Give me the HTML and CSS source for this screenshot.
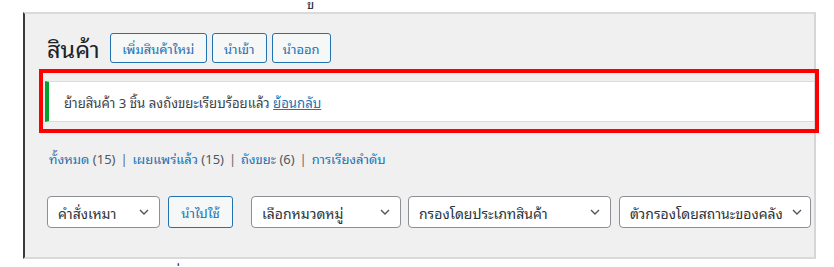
FILE: index.html
```html
<!DOCTYPE html>
<html lang="th">
<head>
<meta charset="utf-8">
<title>สินค้า</title>
<link rel="stylesheet" href="styles.css">
</head>
<body>
<div class="page">
  <div class="top-strip"><span class="stray-top">ข</span></div>
  <div class="panel">
    <div class="title-row">
      <h1 class="title">สินค้า</h1>
      <a class="btn btn-add">เพิ่มสินค้าใหม่</a>
      <a class="btn btn-import">นำเข้า</a>
      <a class="btn btn-export">นำออก</a>
    </div>
    <div class="notice">
      <p class="notice-text">ย้ายสินค้า 3 ชิ้น ลงถังขยะเรียบร้อยแล้ว <a class="notice-link">ย้อนกลับ</a></p>
      <div class="highlight"></div>
    </div>
    <ul class="subsubsub">
      <li><a class="sub-link">ทั้งหมด</a> <span class="count">(15)</span> <span class="sep">|</span> </li>
      <li><a class="sub-link">เผยแพร่แล้ว</a> <span class="count">(15)</span> <span class="sep">|</span> </li>
      <li><a class="sub-link">ถังขยะ</a> <span class="count">(6)</span> <span class="sep">|</span> </li>
      <li><a class="sub-link">การเรียงลำดับ</a></li>
    </ul>
    <div class="filters">
      <div class="select sel-bulk"><span>คำสั่งเหมา</span><svg class="chev" viewBox="0 0 10 6" width="10" height="6"><path d="M1 1l4 4 4-4" fill="none" stroke="#50575e" stroke-width="1.4"/></svg></div>
      <a class="btn btn-apply">นำไปใช้</a>
      <div class="select sel-cat"><span>เลือกหมวดหมู่</span><svg class="chev" viewBox="0 0 10 6" width="10" height="6"><path d="M1 1l4 4 4-4" fill="none" stroke="#50575e" stroke-width="1.4"/></svg></div>
      <div class="select sel-type"><span>กรองโดยประเภทสินค้า</span><svg class="chev" viewBox="0 0 10 6" width="10" height="6"><path d="M1 1l4 4 4-4" fill="none" stroke="#50575e" stroke-width="1.4"/></svg></div>
      <div class="select sel-stock"><span>ตัวกรองโดยสถานะของคลัง</span><svg class="chev" viewBox="0 0 10 6" width="10" height="6"><path d="M1 1l4 4 4-4" fill="none" stroke="#50575e" stroke-width="1.4"/></svg></div>
    </div>
  </div>
  <div class="bottom-strip"><span class="stray-bottom">ก่</span></div>
</div>
</body>
</html>
```
FILE: styles.css
```css
html, body {
  margin: 0;
  padding: 0;
  background: #ffffff;
}
body {
  width: 834px;
  height: 267px;
  overflow: hidden;
  font-family: "Noto Sans Thai Looped", "Noto Sans Thai", "Leelawadee UI", Tahoma, "Noto Sans", "DejaVu Sans", sans-serif;
  color: #3c434a;
}
.page {
  width: 834px;
}
.top-strip {
  height: 12px;
  overflow: hidden;
}
.stray-top {
  display: block;
  margin-left: 307px;
  margin-top: -6px;
  font-size: 13px;
  line-height: 20px;
  color: #1d2327;
}
.panel {
  box-sizing: border-box;
  margin-left: 23px;
  width: 793px;
  height: 247px;
  background: #f0f0f1;
  border-top: 2px solid #dadadb;
  border-left: 2px solid #3a3a3a;
  border-right: 2px solid #d6d6d7;
  border-bottom: 2px solid #dadadb;
  padding: 19px 0 0 20px;
}
.title-row {
  display: flex;
  align-items: center;
  height: 30px;
}
.title {
  margin: 0 10px 0 2px;
  font-size: 23.5px;
  font-weight: 400;
  color: #1d2327;
  line-height: 30px;
}
.btn {
  box-sizing: border-box;
  display: inline-flex;
  align-items: center;
  justify-content: center;
  height: 30px;
  border: 1px solid #2271b1;
  border-radius: 3px;
  background: #f6f7f7;
  color: #2271b1;
  font-size: 13px;
  margin-right: 5px;
}
.btn-add { width: 97px; }
.btn-import { width: 55px; }
.btn-export { width: 59px; }
.notice {
  position: relative;
  box-sizing: border-box;
  margin-top: 18px;
  height: 41px;
  background: #ffffff;
  border: 1px solid #dcdcde;
  border-left: 4px solid #00a32a;
  border-right: none;
  display: flex;
  align-items: center;
  padding-left: 15px;
}
.notice-text {
  margin: 0;
  font-size: 13.2px;
  color: #3c434a;
}
.notice-link {
  color: #2271b1;
  text-decoration: underline;
}
.highlight {
  position: absolute;
  left: -10px;
  top: -13px;
  width: 780px;
  height: 64px;
  box-sizing: border-box;
  border: 4px solid #ff0000;
  pointer-events: none;
}
.subsubsub {
  list-style: none;
  margin: 27px 0 0 4px;
  padding: 0;
  display: flex;
  font-size: 13px;
  line-height: 20px;
  color: #646970;
}
.subsubsub li {
  white-space: pre;
}
.sep {
  margin: 0 1.5px;
}
.sub-link {
  color: #2271b1;
}
.count {
  color: #50575e;
}
.filters {
  display: flex;
  align-items: center;
  margin-top: 27px;
  margin-left: 2px;
}
.select {
  box-sizing: border-box;
  height: 32px;
  background: #ffffff;
  border: 1px solid #8c8f94;
  border-radius: 4px;
  display: flex;
  align-items: center;
  justify-content: space-between;
  padding: 0 10px 0 10px;
  font-size: 14px;
  color: #2c3338;
}
.chev {
  flex: none;
}
.sel-bulk { width: 113px; margin-right: 8px; }
.btn-apply { width: 65px; height: 32px; margin-right: 18px; }
.sel-cat { width: 150px; margin-right: 7px; }
.sel-type { width: 203px; margin-right: 8px; }
.sel-stock { width: 192px; padding-right: 8px; }
.bottom-strip {
  height: 8px;
  overflow: hidden;
}
.stray-bottom {
  display: block;
  margin-left: 172px;
  font-size: 13px;
  line-height: 20px;
  color: #1d2327;
}
```
